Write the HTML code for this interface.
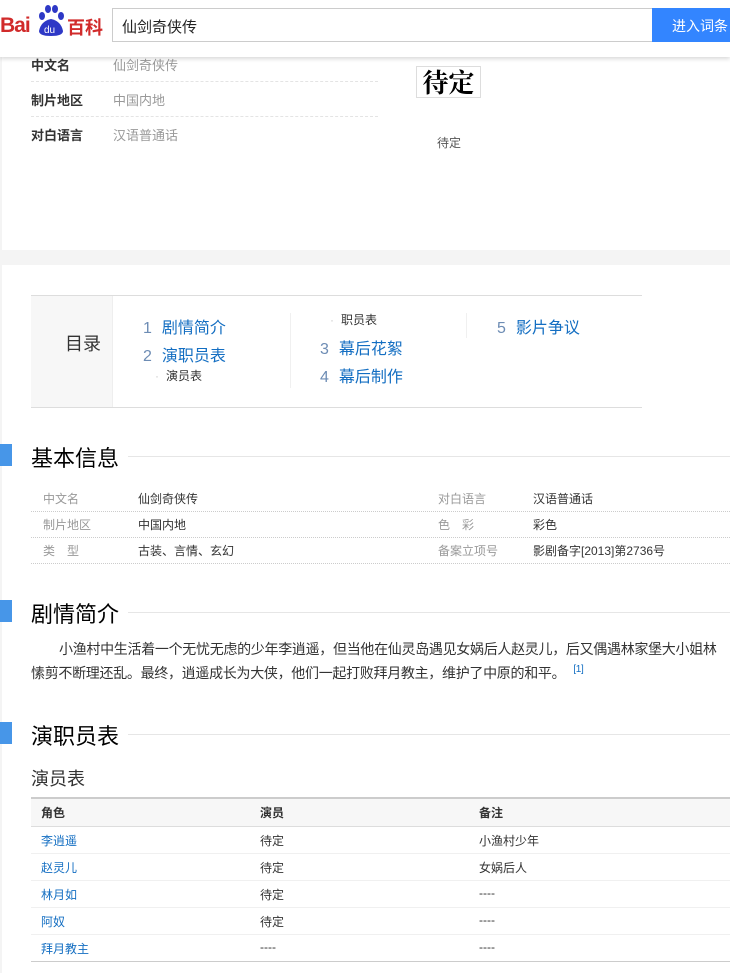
<!DOCTYPE html>
<html><head><meta charset="utf-8"><style>
*{margin:0;padding:0;box-sizing:border-box}
body{width:730px;height:973px;overflow:hidden;background:#f4f4f4;font-family:"Liberation Sans","Noto Sans CJK SC",sans-serif;position:relative;color:#333}
.a{position:absolute;white-space:nowrap}
.hdr{position:absolute;left:0;top:0;width:730px;height:57px;background:#fff;box-shadow:0 2px 4px rgba(0,0,0,.15);z-index:5}
.box{position:absolute;left:2px;width:728px;background:#fff}
.dash{position:absolute;height:0;border-top:1px dashed #e4e4e4}
.dot{position:absolute;left:31px;width:699px;border-top:1px dotted #ccc}
.sec{position:absolute;left:0;width:730px;height:24px}
.sec .bar{position:absolute;left:0;top:0;width:12px;height:22px;background:#4796e8}
.sec .t{position:absolute;left:31px;top:-3px;font-size:22px;color:#000}
.sec .l{position:absolute;left:128px;top:12px;right:0;border-top:1px solid #e6e6e6}
.toc{color:#136ec2;font-size:16px}
.toc b{font-weight:normal;color:#6d8cb4;margin-right:10px}
.s{font-size:12px;color:#333}
.lab{font-size:12px;color:#999}
.val{font-size:12px;color:#333}
.blue{color:#136ec2}
.p{font-size:14px;color:#333;letter-spacing:-0.3px}
</style></head><body>
<div class="hdr">
 <div class="a" style="left:0;top:14px;font-size:21px;font-weight:bold;color:#d12b2b;letter-spacing:-1px">Bai</div>
 <svg class="a" style="left:33px;top:3px" width="36" height="36" viewBox="0 0 36 36"><ellipse cx="9" cy="13" rx="3" ry="4" fill="#2e38c6"/><ellipse cx="15" cy="6" rx="3" ry="4" fill="#2e38c6"/><ellipse cx="22" cy="6" rx="3" ry="4" fill="#2e38c6"/><ellipse cx="28" cy="13" rx="3" ry="4" fill="#2e38c6"/><path d="M6 28 Q8 18 18 16 Q28 18 30 28 Q30 33 18 33 Q6 33 6 28Z" fill="#2e38c6"/><text x="11" y="30" font-size="10" fill="#fff" font-family="Liberation Sans">du</text></svg>
 <div class="a" style="left:67px;top:14px;font-size:18px;font-weight:bold;color:#d12b2b">百科</div>
 <div class="a" style="left:112px;top:8px;width:541px;height:34px;border:1px solid #ccc;font-size:15px;padding:7px 9px;color:#222">仙剑奇侠传</div>
 <div class="a" style="left:652px;top:8px;width:78px;height:34px;background:#3385ff;color:#fff;font-size:14px;padding:8px 20px">进入词条</div>
</div>
<div class="box" style="top:0;height:250px"></div>
<div class="a" style="left:31px;top:55px;font-size:13px;font-weight:bold">中文名</div>
<div class="a" style="left:113px;top:55px;font-size:13px;color:#999">仙剑奇侠传</div>
<div class="dash" style="left:31px;top:81px;width:347px"></div>
<div class="a" style="left:31px;top:90px;font-size:13px;font-weight:bold">制片地区</div>
<div class="a" style="left:113px;top:90px;font-size:13px;color:#999">中国内地</div>
<div class="dash" style="left:31px;top:116px;width:347px"></div>
<div class="a" style="left:31px;top:125px;font-size:13px;font-weight:bold">对白语言</div>
<div class="a" style="left:113px;top:125px;font-size:13px;color:#999">汉语普通话</div>
<div class="a" style="left:416px;top:66px;width:65px;height:32px;border:1px solid #ddd;font-size:26px;font-weight:bold;font-family:'Noto Serif CJK SC',serif;line-height:30px;color:#000;text-align:center">待定</div>
<div class="a" style="left:437px;top:134px;font-size:12px;color:#555">待定</div>

<div class="box" style="top:265px;height:708px"></div>
<div class="a" style="left:31px;top:295px;width:611px;height:113px;border-top:1px solid #ddd;border-bottom:1px solid #ddd"></div>
<div class="a" style="left:31px;top:296px;width:82px;height:111px;background:#f7f7f7;border-right:1px solid #eee"></div>
<div class="a" style="left:65px;top:330px;font-size:18px;color:#333">目录</div>
<div class="a" style="left:290px;top:313px;height:75px;border-left:1px solid #f0f0f0"></div>
<div class="a" style="left:466px;top:313px;height:25px;border-left:1px solid #f0f0f0"></div>
<div class="a toc" style="left:143px;top:314px"><b>1</b>剧情简介</div>
<div class="a toc" style="left:143px;top:342px"><b>2</b>演职员表</div>
<div class="a s" style="left:155px;top:367px"><span style="color:#ccc;margin-right:7px">·</span>演员表</div>
<div class="a s" style="left:330px;top:311px"><span style="color:#ccc;margin-right:7px">·</span>职员表</div>
<div class="a toc" style="left:320px;top:335px"><b>3</b>幕后花絮</div>
<div class="a toc" style="left:320px;top:363px"><b>4</b>幕后制作</div>
<div class="a toc" style="left:497px;top:314px"><b>5</b>影片争议</div>

<div class="sec" style="top:444px"><div class="bar"></div><div class="t">基本信息</div><div class="l"></div></div>
<div class="a lab" style="left:43px;top:490px">中文名</div><div class="a val" style="left:138px;top:490px">仙剑奇侠传</div>
<div class="a lab" style="left:438px;top:490px">对白语言</div><div class="a val" style="left:533px;top:490px">汉语普通话</div>
<div class="dot" style="top:511px"></div>
<div class="a lab" style="left:43px;top:516px">制片地区</div><div class="a val" style="left:138px;top:516px">中国内地</div>
<div class="a lab" style="left:438px;top:516px">色　彩</div><div class="a val" style="left:533px;top:516px">彩色</div>
<div class="dot" style="top:537px"></div>
<div class="a lab" style="left:43px;top:542px">类　型</div><div class="a val" style="left:138px;top:542px">古装、言情、玄幻</div>
<div class="a lab" style="left:438px;top:542px">备案立项号</div><div class="a val" style="left:533px;top:542px">影剧备字[2013]第2736号</div>
<div class="dot" style="top:563px"></div>

<div class="sec" style="top:600px"><div class="bar"></div><div class="t">剧情简介</div><div class="l"></div></div>
<div class="a p" style="left:59px;top:639px">小渔村中生活着一个无忧无虑的少年李逍遥，但当他在仙灵岛遇见女娲后人赵灵儿，后又偶遇林家堡大小姐林</div>
<div class="a p" style="left:31px;top:663px">愫剪不断理还乱。最终，逍遥成长为大侠，他们一起打败拜月教主，维护了中原的和平。<sup class="blue" style="font-size:10px;margin-left:8px">[1]</sup></div>

<div class="sec" style="top:722px"><div class="bar"></div><div class="t">演职员表</div><div class="l"></div></div>
<div class="a" style="left:31px;top:765px;font-size:18px;color:#333">演员表</div>
<div class="a" style="left:31px;top:797px;width:699px;height:30px;border-top:2px solid #ccc;background:#f7f7f7;border-bottom:1px solid #ddd"></div>
<div class="a" style="left:41px;top:804px;font-size:12px;font-weight:bold">角色</div>
<div class="a" style="left:260px;top:804px;font-size:12px;font-weight:bold">演员</div>
<div class="a" style="left:479px;top:804px;font-size:12px;font-weight:bold">备注</div>
<div class="a" style="left:31px;top:853px;width:699px;border-top:1px solid #f0f0f0"></div>
<div class="a" style="left:31px;top:880px;width:699px;border-top:1px solid #f0f0f0"></div>
<div class="a" style="left:31px;top:907px;width:699px;border-top:1px solid #f0f0f0"></div>
<div class="a" style="left:31px;top:934px;width:699px;border-top:1px solid #f0f0f0"></div>
<div class="a" style="left:31px;top:961px;width:699px;border-top:1px solid #ccc"></div>
<div class="a val blue" style="left:41px;top:832px">李逍遥</div><div class="a val" style="left:260px;top:832px">待定</div><div class="a val" style="left:479px;top:832px">小渔村少年</div>
<div class="a val blue" style="left:41px;top:859px">赵灵儿</div><div class="a val" style="left:260px;top:859px">待定</div><div class="a val" style="left:479px;top:859px">女娲后人</div>
<div class="a val blue" style="left:41px;top:886px">林月如</div><div class="a val" style="left:260px;top:886px">待定</div><div class="a val" style="left:479px;top:886px">----</div>
<div class="a val blue" style="left:41px;top:913px">阿奴</div><div class="a val" style="left:260px;top:913px">待定</div><div class="a val" style="left:479px;top:913px">----</div>
<div class="a val blue" style="left:41px;top:940px">拜月教主</div><div class="a val" style="left:260px;top:940px">----</div><div class="a val" style="left:479px;top:940px">----</div>
</body></html>
